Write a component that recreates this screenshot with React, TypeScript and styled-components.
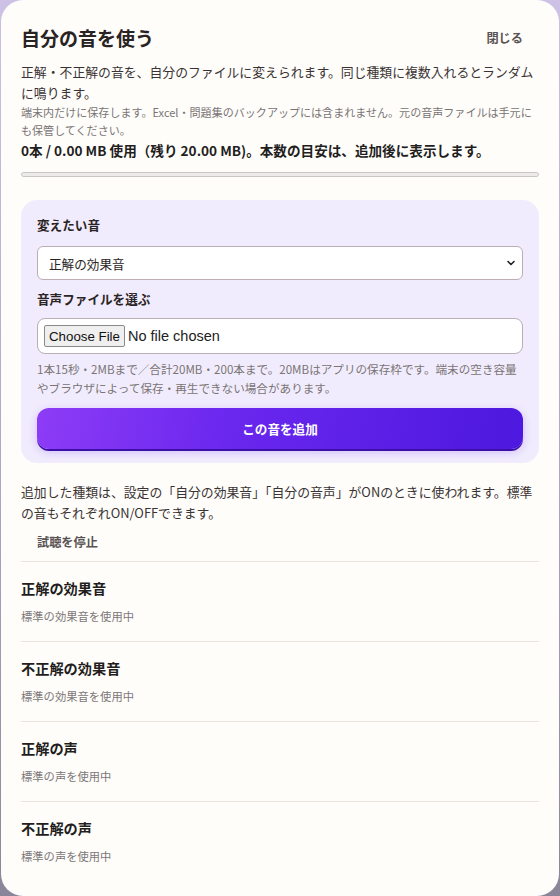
import React from "react";
import styled, { createGlobalStyle } from "styled-components";

const Global = createGlobalStyle`
  html, body { margin: 0; padding: 0; }
  body {
    height: 896px;
    background: linear-gradient(180deg, #cdc2e6 0%, #aea4c6 55%, #8b8599 100%);
    font-family: "Noto Sans CJK JP", "Noto Sans", sans-serif;
    color: #2b2424;
  }
  * { box-sizing: border-box; }
`;

const Modal = styled.div`
  margin: 0 1px;
  height: 896px;
  background: #fefdfa;
  border-radius: 22px;
  padding: 24px 20px 16px;
  overflow: hidden;
`;

const Header = styled.div`
  display: flex;
  align-items: center;
  justify-content: space-between;
  height: 28px;
`;

const Title = styled.h1`
  margin: 0;
  font-size: 19px;
  line-height: 28px;
  font-weight: 700;
  color: #2a2323;
`;

const TextButton = styled.button`
  border: none;
  background: transparent;
  font-family: inherit;
  font-size: 12.2px;
  font-weight: 700;
  color: #5a5353;
  padding: 6px 16px;
  line-height: 16px;
  cursor: pointer;
`;

const Lead = styled.p<{ $top?: number }>`
  margin: ${(p) => p.$top ?? 0}px 0 0;
  padding-right: 5px;
  font-size: 12.85px;
  line-height: 21px;
  color: #3a3333;
`;

const Note = styled.p`
  margin: 0;
  padding-right: 5px;
  font-size: 11.05px;
  line-height: 18px;
  color: #7a7474;
`;

const Usage = styled.p`
  margin: 0;
  font-size: 13.6px;
  line-height: 22px;
  font-weight: 700;
  color: #231d1d;
`;

const Meter = styled.div`
  margin-top: 11px;
  height: 5px;
  border: 1px solid #c9c5c2;
  background: #ecebe9;
  border-radius: 3px;
`;

const Card = styled.div`
  margin-top: 23px;
  background: #f1ecfd;
  border-radius: 16px;
  padding: 16px 16px 14px;
  display: flex;
  flex-direction: column;
`;

const Label = styled.label<{ $top?: number }>`
  margin-top: ${(p) => p.$top ?? 0}px;
  font-size: 12.6px;
  line-height: 18px;
  font-weight: 700;
  color: #2b2424;
`;

const Select = styled.select`
  margin-top: 12px;
  appearance: none;
  width: 100%;
  height: 34px;
  border: 1px solid #bcaeb2;
  border-radius: 6px;
  background: #fff url("data:image/svg+xml;utf8,<svg xmlns='http://www.w3.org/2000/svg' width='10' height='10' viewBox='0 0 10 10'><path d='M2 3.5 L5 6.5 L8 3.5' fill='none' stroke='%23222' stroke-width='1.6' stroke-linecap='round' stroke-linejoin='round'/></svg>") no-repeat right 6px center;
  padding: 0 24px 0 11px;
  font-family: inherit;
  font-size: 12.6px;
  color: #2b2424;
`;

const FileInput = styled.input`
  margin-top: 10px;
  width: 100%;
  height: 36px;
  border: 1px solid #bcaeb2;
  border-radius: 8px;
  background: #fff;
  padding: 6px 6px;
  font-family: "Liberation Sans", Arial, sans-serif;
  font-size: 14.5px;
  color: #222;
  &::file-selector-button {
    font-family: "Liberation Sans", Arial, sans-serif;
    font-size: 13.3px;
    height: 22px;
    padding: 0 4px;
    margin-right: 3px;
    border: 1px solid #8a8a8a;
    border-radius: 2px;
    background: #efefef;
    color: #111;
  }
`;

const Hint = styled.p`
  margin: 6px 0 0;
  font-size: 11.6px;
  line-height: 19px;
  color: #7a7474;
`;

const AddButton = styled.button`
  margin-top: 10px;
  height: 41px;
  width: 100%;
  border: none;
  border-radius: 12px;
  background: linear-gradient(100deg, #8d3cf6 0%, #6a27ee 40%, #4d18df 100%);
  box-shadow: 0 2px 0 #3c0fa6, 0 3px 10px rgba(125, 70, 240, 0.3);
  color: #fff;
  font-family: inherit;
  font-size: 12.6px;
  font-weight: 700;
  cursor: pointer;
`;

const StopRow = styled.div`
  margin-top: 5px;
  display: flex;
`;

const List = styled.div`
  margin-top: 5px;
`;

const Item = styled.div`
  border-top: 1px solid #ebe5de;
  padding: 15px 0 16px;
  display: flex;
  flex-direction: column;
  gap: 8px;
`;

const ItemTitle = styled.div`
  font-size: 14.2px;
  line-height: 22px;
  font-weight: 700;
  color: #231d1d;
`;

const ItemSub = styled.div`
  font-size: 11.3px;
  line-height: 18px;
  color: #7d7777;
`;

const items = [
  { title: "正解の効果音", sub: "標準の効果音を使用中" },
  { title: "不正解の効果音", sub: "標準の効果音を使用中" },
  { title: "正解の声", sub: "標準の声を使用中" },
  { title: "不正解の声", sub: "標準の声を使用中" },
];

export default function App() {
  return (
    <>
      <Global />
      <Modal>
        <Header>
          <Title>自分の音を使う</Title>
          <TextButton>閉じる</TextButton>
        </Header>
        <Lead $top={9}>
          正解・不正解の音を、自分のファイルに変えられます。同じ種類に複数入れるとランダムに鳴ります。
        </Lead>
        <Note>
          端末内だけに保存します。Excel・問題集のバックアップには含まれません。元の音声ファイルは手元にも保管してください。
        </Note>
        <Usage>0本 / 0.00 MB 使用（残り 20.00 MB)。本数の目安は、追加後に表示します。</Usage>
        <Meter />
        <Card>
          <Label>変えたい音</Label>
          <Select defaultValue="correct">
            <option value="correct">正解の効果音</option>
            <option value="wrong">不正解の効果音</option>
            <option value="correctVoice">正解の声</option>
            <option value="wrongVoice">不正解の声</option>
          </Select>
          <Label $top={10}>音声ファイルを選ぶ</Label>
          <FileInput type="file" accept="audio/*" />
          <Hint>
            1本15秒・2MBまで／合計20MB・200本まで。20MBはアプリの保存枠です。端末の空き容量やブラウザによって保存・再生できない場合があります。
          </Hint>
          <AddButton>この音を追加</AddButton>
        </Card>
        <Lead $top={18}>
          追加した種類は、設定の「自分の効果音」「自分の音声」がONのときに使われます。標準の音もそれぞれON/OFFできます。
        </Lead>
        <StopRow>
          <TextButton>試聴を停止</TextButton>
        </StopRow>
        <List>
          {items.map((it) => (
            <Item key={it.title}>
              <ItemTitle>{it.title}</ItemTitle>
              <ItemSub>{it.sub}</ItemSub>
            </Item>
          ))}
        </List>
      </Modal>
    </>
  );
}
